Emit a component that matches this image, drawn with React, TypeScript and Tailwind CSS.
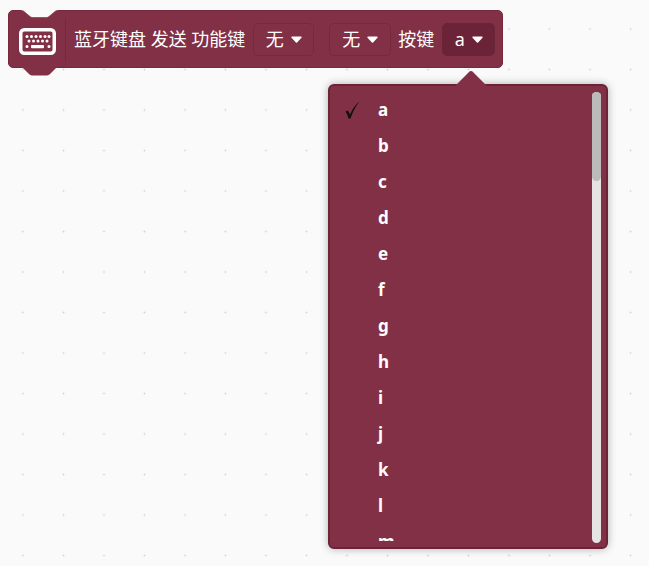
const letters = ['a', 'b', 'c', 'd', 'e', 'f', 'g', 'h', 'i', 'j', 'k', 'l', 'm'];

const FieldDropdown = ({ label, active, width }: { label: string; active?: boolean; width: string }) => (
  <div
    className={`flex h-[33px] items-center justify-center gap-[7px] rounded-[5px] border ${width} ${
      active ? 'border-[#6b2337] bg-[#6b2337]' : 'border-[#76293e]'
    }`}
  >
    <span>{label}</span>
    <svg width="11" height="7" viewBox="0 0 11 7">
      <path d="M1 0.5h9a0.7 0.7 0 0 1 0.5 1.2L6.100 6.400a0.800 0.800 0 0 1-1.200 0L0.500 1.700A0.700 0.700 0 0 1 1 0.500z" fill="#fff" />
    </svg>
  </div>
);

const dotRow = (y: number, xs: number[]) =>
  xs.map((x) => <circle key={`${x}-${y}`} cx={x} cy={y} r="1.5" />);

export default function App() {
  return (
    <div className="relative h-[566px] w-[649px] overflow-hidden bg-[#fafafa] bg-[radial-gradient(circle,#d6d6d6_0.6px,transparent_1.3px)] bg-[size:40.5px_40.5px] bg-[position:2.75px_8.75px] font-['Noto_Sans','Noto_Sans_CJK_SC',sans-serif]">
      {/* block */}
      <div className="absolute left-[8px] top-[10px] flex h-[58px] w-[495px] items-center rounded-[5px] border border-[#76293e] bg-[#823045] text-[18px] text-white">
        <svg className="absolute left-[12px] top-[-2px]" width="37" height="10" viewBox="0 0 37 10">
          <path d="M0 0h37L28 7.500a4 4 0 0 1-2.500 1H11.500a4 4 0 0 1-2.500-1z" fill="#fafafa" stroke="#76293e" strokeWidth="0.6" />
          <path d="M0 0h37" stroke="#fafafa" strokeWidth="2.600" />
        </svg>
        <svg className="absolute left-[13px] top-[56px]" width="35" height="10" viewBox="0 0 35 10">
          <path d="M0 0h35L28 7a4 4 0 0 1-3 1.500H10a4 4 0 0 1-3-1.500z" fill="#823045" />
        </svg>
        <div className="flex h-[43px] w-[57px] shrink-0 items-center justify-center border-r border-[#76293e]">
          <svg width="37" height="27" viewBox="0 0 37 27" className="ml-[1px] mt-[5px]">
            <rect x="1.750" y="1.750" width="33.500" height="23.500" rx="3.500" fill="none" stroke="#fff" strokeWidth="3.500" />
            <g fill="#fff">
              {dotRow(8.500, [8, 12.500, 17, 21.500, 26, 30])}
              {dotRow(13, [10, 14.500, 19, 23.500, 28])}
              {dotRow(18.500, [8, 30])}
              <rect x="12" y="17" width="13" height="3.200" rx="1" />
            </g>
          </svg>
        </div>
        <div className="ml-[8px] flex items-center">
          <span className="whitespace-nowrap">蓝牙键盘 发送 功能键</span>
          <div className="ml-[8px]">
            <FieldDropdown label="无" width="w-[61px]" />
          </div>
          <div className="ml-[15px]">
            <FieldDropdown label="无" width="w-[62px]" />
          </div>
          <span className="ml-[7px] whitespace-nowrap">按键</span>
          <div className="ml-[8px]">
            <FieldDropdown label="a" active width="w-[53px]" />
          </div>
        </div>
      </div>

      {/* dropdown */}
      <div className="absolute left-[328px] top-[84px] h-[465px] w-[280px] rounded-[6px] border-2 border-[#6b2337] bg-[#823045] shadow-[0_0_8px_rgba(0,0,0,0.3)]">
        <svg className="absolute left-[125px] top-[-16px]" width="32" height="17" viewBox="0 0 32 17">
          <path d="M0 16L14 2a2.500 2.500 0 0 1 4 0L32 16v1H0z" fill="#823045" />
        </svg>
        <div className="h-[455px] overflow-hidden pt-[6px] text-[17px] font-bold text-white">
          {letters.map((letter) => (
            <div key={letter} className="flex h-[36px] items-center">
              <span className="flex w-[48px] pl-[15px]">
                {letter === 'a' && (
                  <svg width="15" height="18" viewBox="0 0 15 18">
                    <path d="M0.500 10.500L3 9.500L5 13.500C7.500 8 10.500 3.500 14.500 0.500C10.500 5.500 8 10.500 5.500 17.500H3.500C3 15 1.800 12.500 0.500 10.500z" fill="#111" />
                  </svg>
                )}
              </span>
              <span>{letter}</span>
            </div>
          ))}
        </div>
        <div className="absolute right-[5px] top-[6px] h-[451px] w-[9px] rounded-full bg-[#e6e4e2]">
          <div className="h-[89px] w-[9px] rounded-full bg-[#bbbbbb]" />
        </div>
      </div>
    </div>
  );
}
